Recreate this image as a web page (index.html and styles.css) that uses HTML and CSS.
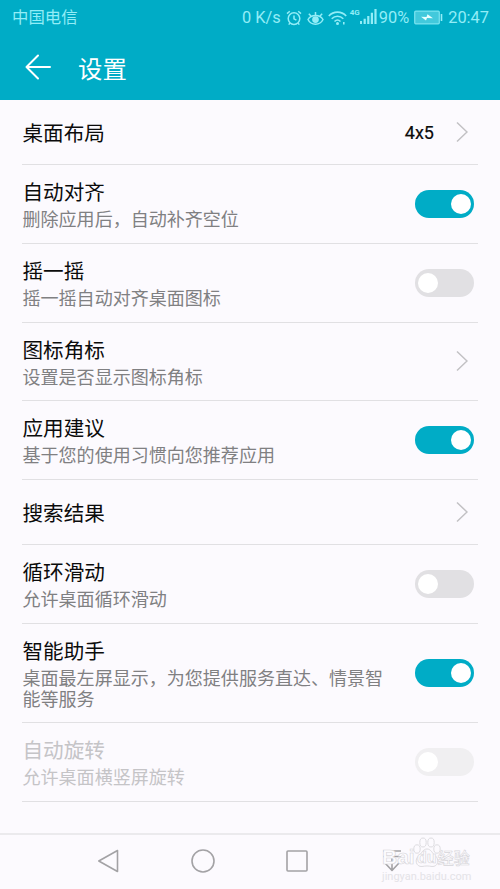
FILE: index.html
```
<!DOCTYPE html>
<html lang="zh-CN">

<head>
    <meta charset="UTF-8">
    <meta name="viewport" content="width=device-width, initial-scale=1.0">
    <title>设置</title>

    <link rel="stylesheet" href="styles.css">
</head>

<body>
    <div class="screen">
        <header class="header">
            <div class="status">
                <span class="status-carrier">中国电信</span>
                <span class="status-speed">0 K/s</span>
                <svg class="status-alarm" width="16" height="16" viewBox="0 0 16 16" fill="none" stroke="currentColor" stroke-width="1.5">
                    <circle cx="8" cy="8.6" r="5.8" />
                    <path d="M8 5.5v3.3l2.4 1.4M1 3.6 3.8 1.2M15 3.6 12.2 1.2M4 13l-1.300 1.600M12 13l1.300 1.600" />
                </svg>
                <svg class="status-eye" width="17" height="16" viewBox="0 0 17 16" fill="none" stroke="currentColor" stroke-width="1.5">
                    <path d="M1 9.500C4 4.200 13 4.200 16 9.500 13 15.800 4 15.800 1 9.500Z" />
                    <circle cx="8.5" cy="9.600" r="2.600" fill="currentColor" />
                    <path d="M8.500 5V2M4 6 1.800 3.800M13 6l2.200-2.200" />
                </svg>
                <svg class="status-wifi" width="19" height="16" viewBox="0 0 19 16" fill="none" stroke="currentColor" stroke-width="1.6">
                    <path d="M.8 6C5.500.8 13.500.8 18.200 6M3.700 8.800c3.300-3.500 8.300-3.500 11.600 0M6.500 11.500c1.800-1.800 4.200-1.800 6 0" />
                    <circle cx="9.500" cy="13.600" r="1.500" fill="currentColor" stroke="none" />
                    <path d="M15.800 12v2.500" />
                </svg>
                <span class="status-network">4G</span>
                <svg class="status-signal" width="17" height="15" viewBox="0 0 17 15" fill="currentColor">
                    <path d="M0 12h2v3H0zM3.600 9.800h2.200V15H3.600zM7.200 7h2.200v8H7.200zM10.800 3.800H13V15h-2.200zM14.400 0h2.200v15h-2.200z" />
                </svg>
                <span class="status-percent">90%</span>
                <svg class="status-battery" width="29" height="15" viewBox="0 0 29 15">
                    <rect x=".7" y="1.200" width="24.600" height="12.600" rx="1" fill="currentColor" fill-opacity=".45" stroke="currentColor" stroke-opacity=".8" stroke-width="1.200" />
                    <path d="M7 6.800 12.500 7l1-2.800 5.500 4-6-.2-1 2.400z" fill="#e8ffff" />
                    <path d="M27.500 4v7" stroke="currentColor" stroke-width="1.600" />
                </svg>
                <span class="status-time">20:47</span>
            </div>
            <div class="toolbar">
                <svg class="toolbar-back" width="28" height="28" viewBox="0 0 28 28" fill="none" stroke="#fff" stroke-width="2" stroke-linecap="round" stroke-linejoin="round">
                    <path d="M14 2.500 2.500 14 14 25.500M2.500 14H26" />
                </svg>
                <h1 class="toolbar-title">设置</h1>
            </div>
        </header>

        <main class="list">
            <div class="row row--single">
                <div class="row-text">
                    <div class="row-title">桌面布局</div>
                </div>
                <span class="row-value">4x5</span>
                <svg class="row-arrow" width="12" height="22" viewBox="0 0 12 22"><path d="m1 1.500 10 9.500L1 20.500" /></svg>
            </div>
            <div class="row">
                <div class="row-text">
                    <div class="row-title">自动对齐</div>
                    <div class="row-desc">删除应用后，自动补齐空位</div>
                </div>
                <span class="switch switch--on"></span>
            </div>
            <div class="row">
                <div class="row-text">
                    <div class="row-title">摇一摇</div>
                    <div class="row-desc">摇一摇自动对齐桌面图标</div>
                </div>
                <span class="switch"></span>
            </div>
            <div class="row">
                <div class="row-text">
                    <div class="row-title">图标角标</div>
                    <div class="row-desc">设置是否显示图标角标</div>
                </div>
                <svg class="row-arrow" width="12" height="22" viewBox="0 0 12 22"><path d="m1 1.500 10 9.500L1 20.500" /></svg>
            </div>
            <div class="row">
                <div class="row-text">
                    <div class="row-title">应用建议</div>
                    <div class="row-desc">基于您的使用习惯向您推荐应用</div>
                </div>
                <span class="switch switch--on"></span>
            </div>
            <div class="row row--single">
                <div class="row-text">
                    <div class="row-title">搜索结果</div>
                </div>
                <svg class="row-arrow" width="12" height="22" viewBox="0 0 12 22"><path d="m1 1.500 10 9.500L1 20.500" /></svg>
            </div>
            <div class="row">
                <div class="row-text">
                    <div class="row-title">循环滑动</div>
                    <div class="row-desc">允许桌面循环滑动</div>
                </div>
                <span class="switch"></span>
            </div>
            <div class="row row--tall">
                <div class="row-text">
                    <div class="row-title">智能助手</div>
                    <div class="row-desc">桌面最左屏显示，为您提供服务直达、情景智能等服务</div>
                </div>
                <span class="switch switch--on"></span>
            </div>
            <div class="row row--disabled">
                <div class="row-text">
                    <div class="row-title">自动旋转</div>
                    <div class="row-desc">允许桌面横竖屏旋转</div>
                </div>
                <span class="switch"></span>
            </div>
        </main>

        <nav class="navbar">
            <svg width="24" height="24" viewBox="0 0 24 24"><path d="M21.500 1.500v21L2.800 12z" /></svg>
            <svg width="24" height="24" viewBox="0 0 24 24"><circle cx="12" cy="12" r="11" /></svg>
            <svg width="24" height="24" viewBox="0 0 24 24"><rect x="2" y="2" width="20" height="20" rx="1" /></svg>
            <svg width="24" height="24" viewBox="0 0 24 24"><path d="M3 2h18M3 7.500h18M12 7.500V21M5 14l7 7.500 7-7.500" /></svg>
            <div class="watermark">
                <div class="watermark-brand">
                    <span>Bai</span>
                    <span class="watermark-du">
                        <svg class="watermark-paw" width="28" height="31" viewBox="0 0 28 31">
                            <ellipse cx="4" cy="12" rx="3.200" ry="4.200" />
                            <ellipse cx="10" cy="5.500" rx="3.200" ry="4.500" />
                            <ellipse cx="18" cy="5.500" rx="3.200" ry="4.500" />
                            <ellipse cx="24" cy="12" rx="3.200" ry="4.200" />
                            <path d="M14 12c-4 0-5 4-8 6.500-5 4-3 11.500 3 11 4-.7 6-.7 10 0 6 .5 8-7 3-11C19 16 18 12 14 12z" />
                        </svg>
                        <span class="watermark-du-text">du</span>
                    </span>
                    <span class="watermark-cn">经验</span>
                </div>
                <div class="watermark-url">jingyan.baidu.com</div>
            </div>
        </nav>
    </div>
</body>

</html>
```
FILE: styles.css
```
:root {
    --accent: #00acc6;
    --background: #fcfafe;
    --status: #92edf7;
    --line: #e1e0e3;
}

* {
    box-sizing: border-box;
}

body {
    margin: 0;
    background-color: var(--background);
    font-family: Roboto, "Noto Sans CJK SC", sans-serif;
    color: #0b0b0b;
}

.screen {
    display: flex;
    flex-direction: column;
    width: 500px;
    height: 889px;
    overflow: hidden;
}

.header {
    height: 100px;
    background-color: var(--accent);
}

.status {
    display: flex;
    align-items: center;
    height: 35px;
    padding: 0 11px 0 12px;
    color: var(--status);
    font-size: 16.4px;
    line-height: 35px;
    white-space: nowrap;
}

.status svg {
    flex: none;
}

.status-carrier {
    margin-right: auto;
}

.status-alarm {
    margin-left: 5px;
}

.status-eye {
    margin-left: 5px;
}

.status-wifi {
    margin-left: 4px;
}

.status-network {
    align-self: flex-start;
    margin-left: 3px;
    font-size: 8px;
    font-weight: 700;
    line-height: 25px;
}

.status-signal {
    margin-bottom: 3px;
}

.status-percent {
    margin-left: 2px;
}

.status-battery {
    margin-bottom: 1px;
    margin-left: 5px;
}

.status-time {
    margin-left: 5px;
}

.toolbar {
    display: flex;
    align-items: center;
    height: 64px;
    padding-left: 24px;
}

.toolbar-title {
    margin: 0 0 0 26px;
    color: #fff;
    font-size: 24.4px;
    font-weight: 400;
}

.list {
    flex: 1;
    padding: 0 22px;
}

.row {
    display: flex;
    align-items: center;
    height: 78.8px;
    padding-right: 4px;
    border-bottom: 1px solid var(--line);
}

.row--single {
    height: 65px;
}

.row--tall {
    height: 99.2px;
}

.row-text {
    width: 366px;
    margin-right: auto;
    padding: 0 0 .8px .5px;
}

.row--single .row-text {
    padding: 3px 0 0 .5px;
}

.row-title {
    font-size: 20.6px;
    line-height: 32px;
}

.row-desc {
    color: #808082;
    font-size: 18.05px;
    line-height: 21px;
}

.row-value {
    margin-right: 22px;
    font-size: 18px;
    -webkit-text-stroke: .2px currentColor;
}

.row-arrow {
    flex: none;
    margin-right: 6px;
    fill: none;
    stroke: #c2c1c4;
    stroke-width: 1.5;
}

.row--disabled .row-title,
.row--disabled .row-desc {
    color: #c5c4c7;
}

.switch {
    display: flex;
    flex: none;
    align-items: center;
    width: 59px;
    height: 28px;
    padding: 0 3px;
    border-radius: 14px;
    background-color: #e1e0e3;
}

.switch::before {
    content: "";
    width: 20px;
    height: 20px;
    border-radius: 50%;
    background-color: #fff;
}

.switch--on {
    justify-content: flex-end;
    background-color: var(--accent);
}

.row--disabled .switch {
    background-color: #f0eff1;
}

.navbar {
    display: flex;
    position: relative;
    align-items: center;
    gap: 70.5px;
    height: 56px;
    padding: 0 0 2px 96px;
    border-top: 2px solid #ebeaed;
}

.navbar > svg {
    flex: none;
    fill: none;
    stroke: #a3a2a5;
    stroke-width: 1.6;
    stroke-linejoin: round;
}

/* stamped over the right end of the navigation bar */
.watermark {
    position: absolute;
    top: 8px;
    left: 382px;
    width: 96px;
    color: #fdfcff;
    white-space: nowrap;
}

.watermark-brand {
    display: flex;
    align-items: center;
    height: 28px;
    font-family: "Liberation Sans", "Noto Sans CJK SC", sans-serif;
    font-size: 21px;
    font-weight: 700;
    -webkit-text-stroke: .6px #d6d5d9;
}

.watermark-du {
    display: grid;
    place-items: center;
    margin: -10px 1px 0 2px;
    font-size: 16px;
}

.watermark-paw,
.watermark-du-text {
    grid-area: 1 / 1;
}

.watermark-paw {
    margin: 0 -4px;
    fill: none;
    stroke: #dddce0;
}

.watermark-du-text {
    padding-top: 12px;
}

.watermark-cn {
    font-size: 16px;
    font-weight: 500;
}

.watermark-url {
    color: #e4e3e7;
    font-size: 11px;
    line-height: 12px;
}
```
